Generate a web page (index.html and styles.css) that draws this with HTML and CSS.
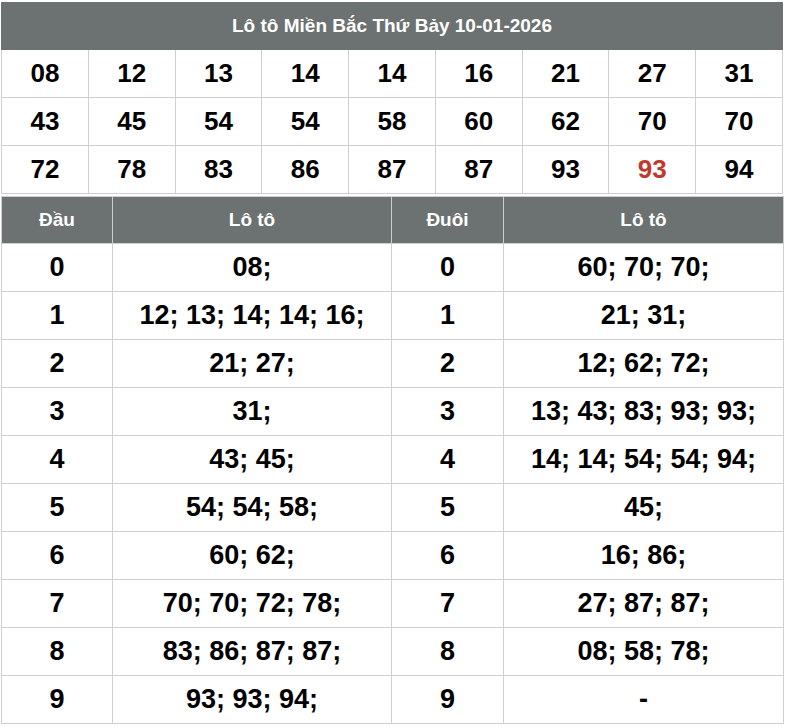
FILE: index.html
```html
<!DOCTYPE html>
<html lang="vi">
<head>
<meta charset="utf-8">
<title>Lô tô Miền Bắc</title>
<link rel="stylesheet" href="styles.css">
</head>
<body>
<div class="wrap">
  <table class="loto">
    <thead>
      <tr><th colspan="9" class="title">Lô tô Miền Bắc Thứ Bảy 10-01-2026</th></tr>
    </thead>
    <tbody>
      <tr><td>08</td><td>12</td><td>13</td><td>14</td><td>14</td><td>16</td><td>21</td><td>27</td><td>31</td></tr>
      <tr><td>43</td><td>45</td><td>54</td><td>54</td><td>58</td><td>60</td><td>62</td><td>70</td><td>70</td></tr>
      <tr><td>72</td><td>78</td><td>83</td><td>86</td><td>87</td><td>87</td><td>93</td><td class="red">93</td><td>94</td></tr>
    </tbody>
  </table>
  <table class="dd">
    <colgroup>
      <col class="c1"><col class="c2"><col class="c3"><col class="c4">
    </colgroup>
    <thead>
      <tr><th>Đầu</th><th>Lô tô</th><th>Đuôi</th><th>Lô tô</th></tr>
    </thead>
    <tbody>
      <tr><td>0</td><td>08;</td><td>0</td><td>60; 70; 70;</td></tr>
      <tr><td>1</td><td>12; 13; 14; 14; 16;</td><td>1</td><td>21; 31;</td></tr>
      <tr><td>2</td><td>21; 27;</td><td>2</td><td>12; 62; 72;</td></tr>
      <tr><td>3</td><td>31;</td><td>3</td><td>13; 43; 83; 93; 93;</td></tr>
      <tr><td>4</td><td>43; 45;</td><td>4</td><td>14; 14; 54; 54; 94;</td></tr>
      <tr><td>5</td><td>54; 54; 58;</td><td>5</td><td>45;</td></tr>
      <tr><td>6</td><td>60; 62;</td><td>6</td><td>16; 86;</td></tr>
      <tr><td>7</td><td>70; 70; 72; 78;</td><td>7</td><td>27; 87; 87;</td></tr>
      <tr><td>8</td><td>83; 86; 87; 87;</td><td>8</td><td>08; 58; 78;</td></tr>
      <tr><td>9</td><td>93; 93; 94;</td><td>9</td><td>-</td></tr>
    </tbody>
  </table>
</div>
</body>
</html>
```
FILE: styles.css
```css
html, body {
  margin: 0;
  padding: 0;
  background: #fff;
}
body {
  font-family: "Liberation Sans", Arial, sans-serif;
  color: #000;
}
.wrap {
  width: 782px;
  padding: 2px 0 0 1px;
}
table {
  width: 782px;
  border-collapse: collapse;
  table-layout: fixed;
}
th, td {
  border: 1px solid #cfcfcf;
  text-align: center;
  padding: 0;
  font-weight: bold;
}
th {
  background: #6b7271;
  color: #fff;
  font-size: 19px;
  height: 46px;
}
.loto th.title {
  border-color: #6b7271;
}
.loto td {
  height: 47px;
  font-size: 26px;
}
.loto td.red {
  color: #c0392b;
}
.dd {
  margin-top: 2px;
}
.dd col.c1 { width: 111px; }
.dd col.c2 { width: 279px; }
.dd col.c3 { width: 112px; }
.dd col.c4 { width: 280px; }
.dd th {
  border-color: #cfcfcf;
  height: 46px;
}
.dd td {
  height: 47px;
  font-size: 27px;
}
```
